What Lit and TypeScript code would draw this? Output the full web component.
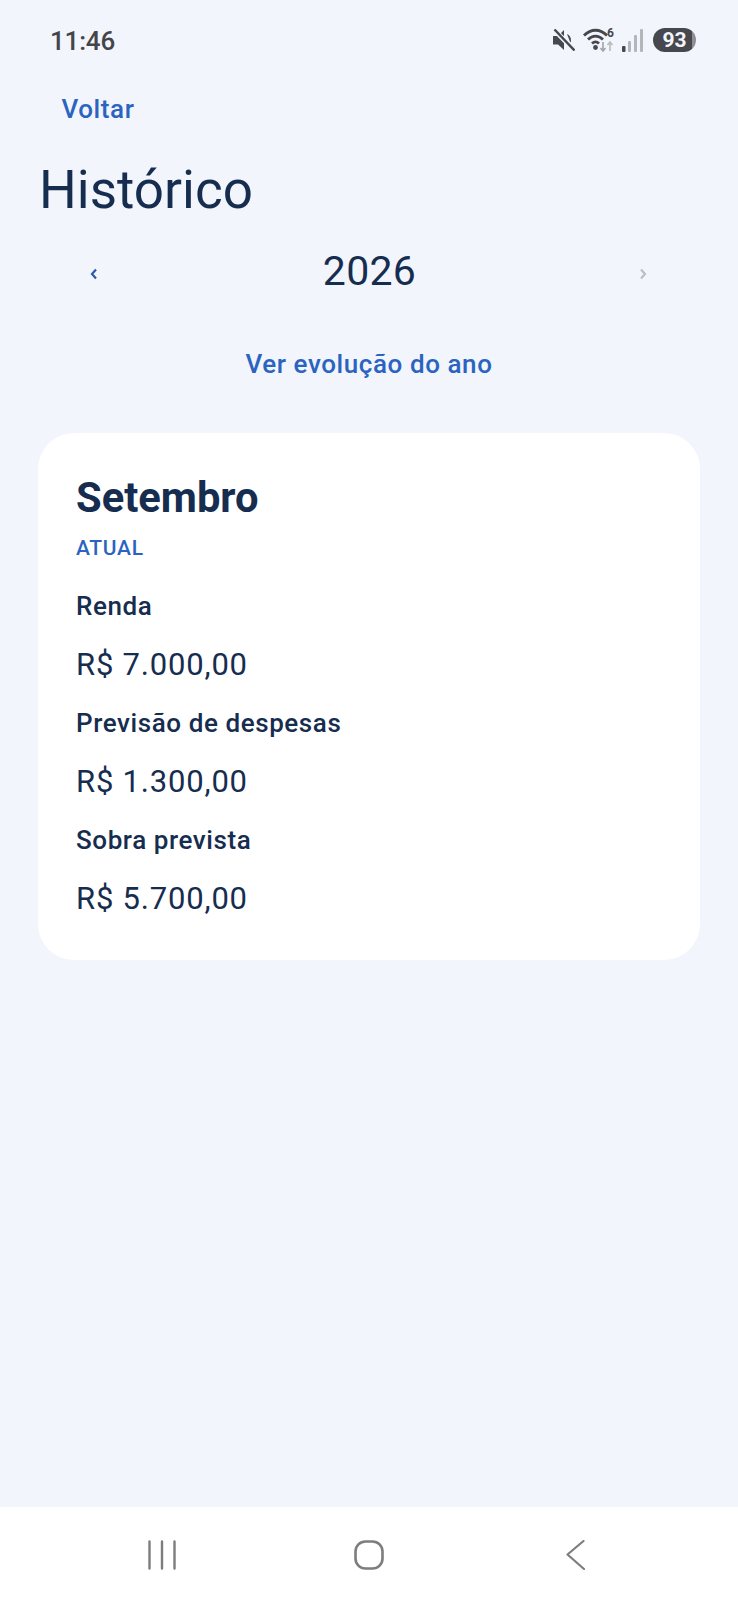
import { LitElement, html, css } from "lit";
import { customElement } from "lit/decorators.js";

interface Row { label: string; value: string; }

const rows: Row[] = [
  { label: "Renda", value: "R$ 7.000,00" },
  { label: "Previsão de despesas", value: "R$ 1.300,00" },
  { label: "Sobra prevista", value: "R$ 5.700,00" },
];

@customElement("app-root")
export class AppRoot extends LitElement {
  static styles = css`
    :host {
      display: flex;
      flex-direction: column;
      width: 738px;
      height: 1600px;
      background: #f2f5fc;
      font-family: Roboto, "Liberation Sans", sans-serif;
      color: #162d50;
      overflow: hidden;
    }
    .status {
      display: flex;
      align-items: center;
      justify-content: space-between;
      height: 40px;
      margin-top: 20px;
      padding: 0 42px 0 50px;
      color: #444549;
    }
    .time { margin-top: 1px; font-size: 26px; font-weight: 500; line-height: 40px; letter-spacing: -0.2px; }
    .indicators { display: flex; align-items: center; }
    .indicators svg { display: block; }
    .mute { margin-right: 8px; }
    .wifi { margin-right: 7px; }
    .signal { margin-right: 10px; }
    .battery {
      width: 43px;
      height: 24px;
      border-radius: 12px;
      background: linear-gradient(90deg, #46484d 90%, #8d8f94 90%);
      color: #f2f5fc;
      font-size: 21px;
      font-weight: 700;
      line-height: 24px;
      text-align: center;
    }
    .content { flex: 1; display: flex; flex-direction: column; padding: 0 38px; }
    .back {
      margin: 34px 0 0 23.5px;
      font-size: 26px;
      font-weight: 500;
      line-height: 30px;
      letter-spacing: 0.58px;
      color: #2a64c0;
    }
    h1 {
      margin: 35px 0 0 1px;
      font-size: 53px;
      font-weight: 400;
      line-height: 62px;
      color: #162d50;
    }
    .year {
      display: grid;
      grid-template-columns: 1fr auto 1fr;
      align-items: center;
      margin-top: 24.5px;
      padding: 0 53px 0 54px;
      height: 50px;
    }
    .year span { font-size: 41px; line-height: 50px; letter-spacing: 0.3px; }
    .year svg { display: block; margin-top: 6px; }
    .year .prev { margin-left: -2px; }
    .year .next { justify-self: end; }
    .evolution {
      margin-top: 53.5px;
      text-align: center;
      font-size: 26px;
      font-weight: 500;
      line-height: 30px;
      letter-spacing: 0.58px;
      color: #2a64c0;
    }
    .card {
      margin-top: 54px;
      width: 662px;
      height: 527px;
      box-sizing: border-box;
      padding: 41px 38px 0;
      background: #fff;
      border-radius: 36px;
    }
    h2 { margin: 0; font-size: 41.7px; font-weight: 700; line-height: 48px; color: #162d50; }
    .tag {
      margin-top: 13px;
      font-size: 21px;
      font-weight: 500;
      line-height: 26px;
      color: #2a64c0;
      letter-spacing: 0.7px;
    }
    .row-label {
      margin-top: 30px;
      font-size: 26px;
      font-weight: 500;
      line-height: 30px;
      letter-spacing: 0.58px;
    }
    .row-value {
      margin-top: 27.4px;
      font-size: 31px;
      line-height: 34px;
      letter-spacing: 0.8px;
    }
    .row + .row .row-label { margin-top: 25.5px; }
    .nav {
      display: flex;
      align-items: center;
      height: 93px;
      box-sizing: border-box;
      padding: 3px 0 0 148px;
      background: #fff;
    }
    .nav svg { display: block; }
    .nav .home { margin: 0 182px 0 178px; }
  `;

  render() {
    return html`
      <div class="status">
        <span class="time">11:46</span>
        <div class="indicators">
          <svg class="mute" width="22" height="22" viewBox="0 0 22 22" fill="#46484d">
            <path d="M0 7h5l6-6v20l-6-5.500H0z" />
            <path d="M14 5c2.500 1 4 3.500 4 6 0 1-.2 2-.6 2.800z" />
            <path d="M1 0.500l20.500 21" stroke="#f2f5fc" stroke-width="5" />
            <path d="M1.500 0.500l20 21" stroke="#46484d" stroke-width="2.400" />
          </svg>
          <svg class="wifi" width="32" height="26" viewBox="0 0 32 26" fill="none">
            <path d="M1 8.500C8 1.500 17 1.500 24 8.500" stroke="#46484d" stroke-width="2.800" />
            <path d="M5 12.500c4.500-4.500 10.500-4.500 15 0" stroke="#46484d" stroke-width="2.800" />
            <path d="M9 16.500c2.200-2 4.800-2 7 0" stroke="#46484d" stroke-width="2.800" />
            <circle cx="12.500" cy="20.500" r="2.400" fill="#46484d" />
            <text x="24" y="10" font-family="Roboto, sans-serif" font-size="12" font-weight="700" fill="#46484d">6</text>
            <path d="M20 15v9m-2.500-3l2.500 3 2.500-3" stroke="#a2a4a8" stroke-width="1.600" />
            <path d="M27 24v-9m-2.500 3l2.500-3 2.500 3" stroke="#b9bbbf" stroke-width="1.600" />
          </svg>
          <svg class="signal" width="21" height="23" viewBox="0 0 21 23">
            <rect x="0" y="17" width="3.500" height="6" rx="1" fill="#46484d" />
            <rect x="6" y="12" width="3" height="11" rx="1" fill="#b4b6ba" />
            <rect x="12" y="6" width="3" height="17" rx="1" fill="#b4b6ba" />
            <rect x="18" y="0" width="3" height="23" rx="1" fill="#b4b6ba" />
          </svg>
          <div class="battery">93</div>
        </div>
      </div>
      <div class="content">
        <div class="back">Voltar</div>
        <h1>Histórico</h1>
        <div class="year">
          <svg class="prev" width="8" height="12" viewBox="0 0 8 12" fill="none">
            <path d="M6 1.500L2 6l4 4.500" stroke="#2a5bb0" stroke-width="2.200" />
          </svg>
          <span>2026</span>
          <svg class="next" width="8" height="12" viewBox="0 0 8 12" fill="none">
            <path d="M2 1.500L6 6l-4 4.500" stroke="#b9bec8" stroke-width="2.200" />
          </svg>
        </div>
        <div class="evolution">Ver evolução do ano</div>
        <div class="card">
          <h2>Setembro</h2>
          <div class="tag">ATUAL</div>
          ${rows.map(
            (r) => html`<div class="row">
              <div class="row-label">${r.label}</div>
              <div class="row-value">${r.value}</div>
            </div>`
          )}
        </div>
      </div>
      <div class="nav">
        <svg width="28" height="30" viewBox="0 0 28 30" stroke="#7d7d7d" stroke-width="2.400" stroke-linecap="round">
          <path d="M1.500 1.500v27M14 1.500v27M26.500 1.500v27" />
        </svg>
        <svg class="home" width="30" height="30" viewBox="0 0 30 30" fill="none" stroke="#7d7d7d" stroke-width="2.600">
          <rect x="1.500" y="1.500" width="27" height="27" rx="10" />
        </svg>
        <svg width="19" height="30" viewBox="0 0 19 30" fill="none" stroke="#7d7d7d" stroke-width="2.200" stroke-linecap="round" stroke-linejoin="round">
          <path d="M17.500 1L1.500 14.500 18 29" />
        </svg>
      </div>
    `;
  }
}
